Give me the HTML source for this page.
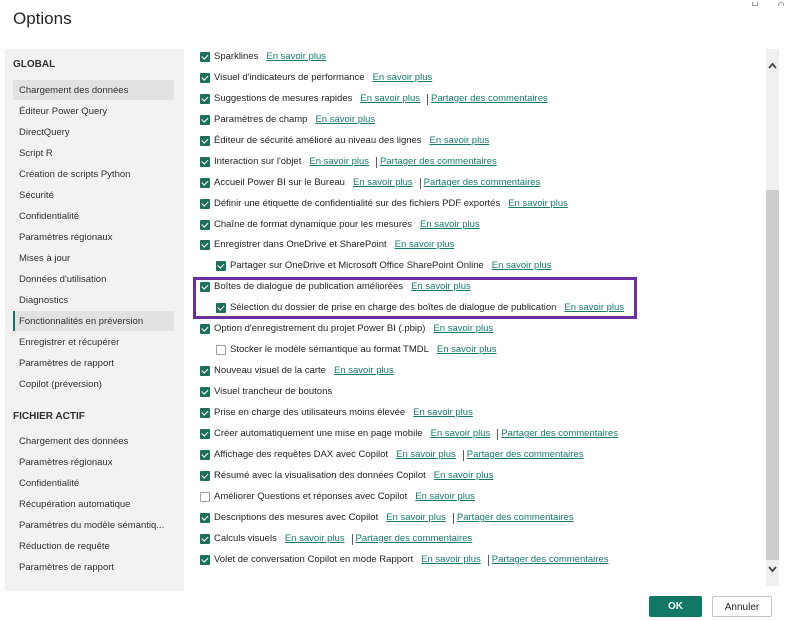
<!DOCTYPE html>
<html><head><meta charset="utf-8"><style>
*{margin:0;padding:0;box-sizing:border-box}
body{width:789px;height:621px;background:#fff;font-family:"Liberation Sans",sans-serif;color:#252423;position:relative;overflow:hidden;font-size:9.5px}
.title{position:absolute;left:13px;top:9px;font-size:17px;color:#252423}
.left{position:absolute;left:5px;top:49px;width:179px;height:542px;background:#f3f2f1}
.h{position:absolute;left:13px;font-weight:bold;font-size:10px;color:#323130}
.it{position:absolute;left:13px;width:161px;height:20px;line-height:20px;padding-left:6px;font-size:9.5px;color:#323130}
.sel{background:#e3e2e1}
.act{background:#e3e2e1;border-left:2px solid #117865;padding-left:4px}
.row{position:absolute;height:14px;line-height:14px;white-space:nowrap;display:flex;align-items:center}
.cb{width:10px;height:10px;background:#1e6f5c;border-radius:1px;margin-right:4px;position:relative;flex:none}
.cb::after{content:"";position:absolute;left:3px;top:1px;width:2.5px;height:5px;border:solid #fff;border-width:0 1.5px 1.5px 0;transform:rotate(45deg)}
.cb.off{background:#fff;border:1px solid #a19f9d}
.cb.off::after{display:none}
a{color:#167a6c;text-decoration:underline;margin-left:8px}
.sep{margin-left:7px;border-left:1px solid #605e5c;height:11px;margin-right:3px}
.sep+a{margin-left:0}
.box{position:absolute;left:193px;top:277px;width:444px;height:42px;border:3px solid #6b2fa0}
.sb{position:absolute;left:766px;top:49px;width:13px;height:537px;background:#f0f0f0}
.thumb{position:absolute;left:766px;top:190px;width:13px;height:370px;background:#cdcdcd}
.btn{position:absolute;top:596px;height:21px;line-height:21px;text-align:center;font-size:10px;border-radius:2px}
</style></head><body>
<div class="title">Options</div>
<div style="position:absolute;left:752px;top:2px;width:6px;height:4px;border:1px solid #999;border-top:none"></div>
<div style="position:absolute;left:778px;top:2px;width:6px;height:4px;border:1px solid #999;border-bottom:none;border-radius:3px 3px 0 0"></div>
<div class="left"></div>
<div class="h" style="top:59px">GLOBAL</div>
<div class="it sel" style="top:80px;line-height:21px">Chargement des données</div>
<div class="it" style="top:102px">Éditeur Power Query</div>
<div class="it" style="top:123px">DirectQuery</div>
<div class="it" style="top:144px">Script R</div>
<div class="it" style="top:165px">Création de scripts Python</div>
<div class="it" style="top:186px">Sécurité</div>
<div class="it" style="top:207px">Confidentialité</div>
<div class="it" style="top:228px">Paramètres régionaux</div>
<div class="it" style="top:249px">Mises à jour</div>
<div class="it" style="top:270px">Données d'utilisation</div>
<div class="it" style="top:291px">Diagnostics</div>
<div class="it act" style="top:311px;line-height:21px">Fonctionnalités en préversion</div>
<div class="it" style="top:333px">Enregistrer et récupérer</div>
<div class="it" style="top:354px">Paramètres de rapport</div>
<div class="it" style="top:375px">Copilot (préversion)</div>
<div class="h" style="top:411px">FICHIER ACTIF</div>
<div class="it" style="top:432px">Chargement des données</div>
<div class="it" style="top:453px">Paramètres régionaux</div>
<div class="it" style="top:474px">Confidentialité</div>
<div class="it" style="top:495px">Récupération automatique</div>
<div class="it" style="top:516px">Paramètres du modèle sémantiq...</div>
<div class="it" style="top:537px">Réduction de requête</div>
<div class="it" style="top:558px">Paramètres de rapport</div>

<div class="row" style="left:200px;top:50px"><span class="cb"></span>Sparklines<a>En savoir plus</a></div>
<div class="row" style="left:200px;top:71px"><span class="cb"></span>Visuel d'indicateurs de performance<a>En savoir plus</a></div>
<div class="row" style="left:200px;top:92px"><span class="cb"></span>Suggestions de mesures rapides<a>En savoir plus</a><span class="sep"></span><a>Partager des commentaires</a></div>
<div class="row" style="left:200px;top:113px"><span class="cb"></span>Paramètres de champ<a>En savoir plus</a></div>
<div class="row" style="left:200px;top:134px"><span class="cb"></span>Éditeur de sécurité amélioré au niveau des lignes<a>En savoir plus</a></div>
<div class="row" style="left:200px;top:155px"><span class="cb"></span>Interaction sur l'objet<a>En savoir plus</a><span class="sep"></span><a>Partager des commentaires</a></div>
<div class="row" style="left:200px;top:176px"><span class="cb"></span>Accueil Power BI sur le Bureau<a>En savoir plus</a><span class="sep"></span><a>Partager des commentaires</a></div>
<div class="row" style="left:200px;top:197px"><span class="cb"></span>Définir une étiquette de confidentialité sur des fichiers PDF exportés<a>En savoir plus</a></div>
<div class="row" style="left:200px;top:218px"><span class="cb"></span>Chaîne de format dynamique pour les mesures<a>En savoir plus</a></div>
<div class="row" style="left:200px;top:238px"><span class="cb"></span>Enregistrer dans OneDrive et SharePoint<a>En savoir plus</a></div>
<div class="row" style="left:216px;top:259px"><span class="cb"></span>Partager sur OneDrive et Microsoft Office SharePoint Online<a>En savoir plus</a></div>
<div class="row" style="left:200px;top:280px"><span class="cb"></span>Boîtes de dialogue de publication améliorées<a>En savoir plus</a></div>
<div class="row" style="left:216px;top:301px"><span class="cb"></span>Sélection du dossier de prise en charge des boîtes de dialogue de publication<a>En savoir plus</a></div>
<div class="row" style="left:200px;top:322px"><span class="cb"></span>Option d'enregistrement du projet Power BI (.pbip)<a>En savoir plus</a></div>
<div class="row" style="left:216px;top:343px"><span class="cb off"></span>Stocker le modèle sémantique au format TMDL<a>En savoir plus</a></div>
<div class="row" style="left:200px;top:364px"><span class="cb"></span>Nouveau visuel de la carte<a>En savoir plus</a></div>
<div class="row" style="left:200px;top:385px"><span class="cb"></span>Visuel trancheur de boutons</div>
<div class="row" style="left:200px;top:406px"><span class="cb"></span>Prise en charge des utilisateurs moins élevée<a>En savoir plus</a></div>
<div class="row" style="left:200px;top:427px"><span class="cb"></span>Créer automatiquement une mise en page mobile<a>En savoir plus</a><span class="sep"></span><a>Partager des commentaires</a></div>
<div class="row" style="left:200px;top:448px"><span class="cb"></span>Affichage des requêtes DAX avec Copilot<a>En savoir plus</a><span class="sep"></span><a>Partager des commentaires</a></div>
<div class="row" style="left:200px;top:469px"><span class="cb"></span>Résumé avec la visualisation des données Copilot<a>En savoir plus</a></div>
<div class="row" style="left:200px;top:490px"><span class="cb off"></span>Améliorer Questions et réponses avec Copilot<a>En savoir plus</a></div>
<div class="row" style="left:200px;top:511px"><span class="cb"></span>Descriptions des mesures avec Copilot<a>En savoir plus</a><span class="sep"></span><a>Partager des commentaires</a></div>
<div class="row" style="left:200px;top:532px"><span class="cb"></span>Calculs visuels<a>En savoir plus</a><span class="sep"></span><a>Partager des commentaires</a></div>
<div class="row" style="left:200px;top:553px"><span class="cb"></span>Volet de conversation Copilot en mode Rapport<a>En savoir plus</a><span class="sep"></span><a>Partager des commentaires</a></div>
<div class="box"></div>

<div class="sb"></div><div class="thumb"></div>
<svg style="position:absolute;left:766px;top:60px" width="13" height="12"><path d="M3 8 L6.5 4 L10 8" stroke="#444" stroke-width="1.8" fill="none"/></svg>
<svg style="position:absolute;left:766px;top:563px" width="13" height="12"><path d="M3 4 L6.5 8 L10 4" stroke="#444" stroke-width="1.8" fill="none"/></svg>

<div class="btn" style="left:649px;width:53px;background:#117865;color:#fff;font-weight:bold">OK</div>
<div class="btn" style="left:712px;width:60px;border:1px solid #c8c6c4;color:#252423">Annuler</div>
</body></html>
